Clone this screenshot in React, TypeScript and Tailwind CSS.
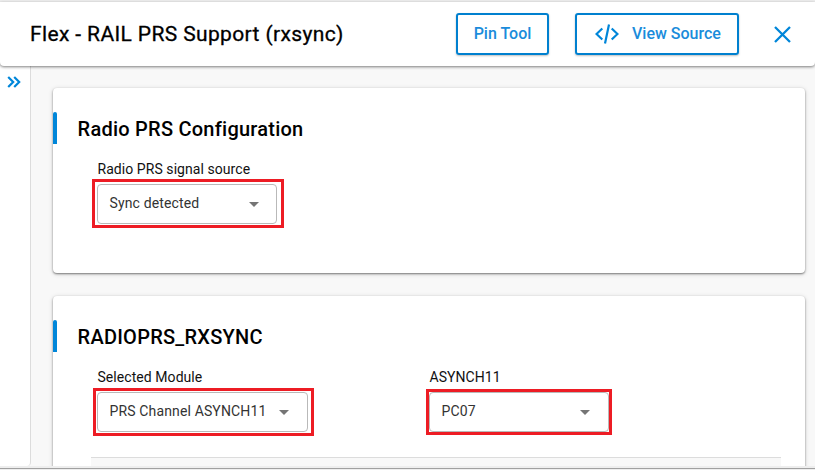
import React from "react";

type SelectProps = {
  label: string;
  value: string;
  width: string;
  outline: string;
  caret: string;
};

function SelectField({ label, value, width, outline, caret }: SelectProps) {
  return (
    <div className={width}>
      <div className="h-5 whitespace-nowrap pl-[0.5px] text-sm leading-5 tracking-[0.06px] text-[#111]">{label}</div>
      <div className="relative mt-[5px] flex h-10 items-center justify-between rounded border border-[#b9b9b9] bg-white pl-[11.5px]">
        <span className="relative -top-px whitespace-nowrap text-sm leading-5 tracking-[0.14px] text-[#333]">{value}</span>
        <svg className={caret} width="10" height="5" viewBox="0 0 10 5" fill="#757575">
          <path d="M0 0h10L5 5z" />
        </svg>
        <span className={`pointer-events-none absolute border-[3px] border-[#ed1c24] ${outline}`} />
      </div>
    </div>
  );
}

function Card({ title, className, children }: { title: string; className: string; children: React.ReactNode }) {
  return (
    <section
      className={`w-[752px] shrink-0 rounded bg-white pt-6 shadow-[0_1px_2px_rgba(0,0,0,0.45),0_1px_5px_rgba(0,0,0,0.16)] ${className}`}
    >
      <div className="flex h-8 items-center">
        <span className="h-8 w-1 rounded-t-sm bg-[#0086d9]" />
        <h2 className="ml-[20.6px] whitespace-nowrap pt-0.5 text-xl font-medium leading-6 tracking-[0.24px] text-black">{title}</h2>
      </div>
      {children}
    </section>
  );
}

export default function App() {
  return (
    <div className="flex h-[470px] w-[815px] flex-col overflow-hidden bg-[#f8f8f8] font-['Roboto','Liberation_Sans',sans-serif]">
      <div className="h-0.5 shrink-0 bg-[#eeeeee]" />
      <header className="relative z-10 flex h-16 shrink-0 items-center rounded-b bg-white pl-[30px] shadow-[0_1px_3px_rgba(0,0,0,0.5)]">
        <h1 className="w-[426px] whitespace-nowrap text-[21px] font-normal leading-6 tracking-[0.37px] text-black [-webkit-text-stroke:0.3px_black]">
          Flex - RAIL PRS Support (rxsync)
        </h1>
        <button className="flex h-[42px] w-[93px] items-center justify-center whitespace-nowrap rounded-[3px] border-2 border-[#0080cf] text-base font-medium text-[#1a8cdb] shadow-[0_1px_2px_rgba(0,0,0,0.25)]">
          Pin Tool
        </button>
        <button className="ml-[26px] flex h-[42px] w-[164px] items-center whitespace-nowrap rounded-[3px] border-2 border-[#0080cf] pl-[18px] text-base font-medium text-[#1a8cdb] shadow-[0_1px_2px_rgba(0,0,0,0.25)]">
          <svg width="24" height="20" viewBox="0 0 24 20" fill="none" stroke="#0086d9" strokeWidth="2.2">
            <path d="M7.3 4.5 1.5 10l5.8 5.5M16.7 4.5l5.8 5.5-5.8 5.5M14 0.5 10 19.5" />
          </svg>
          <span className="ml-[13px]">View Source</span>
        </button>
        <button aria-label="Close" className="ml-[35px]">
          <svg width="17" height="17" viewBox="0 0 17 17" fill="none" stroke="#0086d9" strokeWidth="2.3">
            <path d="m1 1 15 15M16 1 1 16" />
          </svg>
        </button>
      </header>
      <div className="flex h-[400px] shrink-0 overflow-hidden">
        <aside className="w-[31px] shrink-0 rounded-br border-r border-[#dcdcdc] bg-white pl-[7px] pt-2.5">
          <svg width="15" height="12" viewBox="0 0 15 12" fill="none" stroke="#0086d9" strokeWidth="2.2">
            <path d="m1.2 1 5 5-5 5M7.2 1l5 5-5 5" />
          </svg>
        </aside>
        <main className="flex flex-col pl-[22px] pt-[22px]">
          <Card title="Radio PRS Configuration" className="h-[185px]">
            <div className="flex pl-11 pt-[15px]">
              <SelectField
                label="Radio PRS signal source"
                value="Sync detected"
                width="w-[180px]"
                caret="mr-[17.5px]"
                outline="-left-1.5 -top-1.5 h-[49px] w-[192px]"
              />
            </div>
          </Card>
          <Card title="RADIOPRS_RXSYNC" className="mt-[23px] h-[190px]">
            <div className="flex gap-[121px] pl-11 pt-[15px]">
              <SelectField
                label="Selected Module"
                value="PRS Channel ASYNCH11"
                width="w-[211px]"
                caret="mr-[18px]"
                outline="-left-[5px] -top-[5px] h-12 w-[221px]"
              />
              <SelectField
                label="ASYNCH11"
                value="PC07"
                width="w-[180px]"
                caret="mr-[18px]"
                outline="-left-1 -top-1 h-[46px] w-[186px]"
              />
            </div>
            <div className="ml-[38px] mt-[25px] h-5 w-[690px] border-t border-[#dcdcdc] bg-[#f8f8f8]" />
          </Card>
        </main>
      </div>
      <footer className="h-1 shrink-0 bg-[#eeeeee] pt-0.5">
        <div className="h-px bg-[#a0a0a0]" />
      </footer>
    </div>
  );
}
